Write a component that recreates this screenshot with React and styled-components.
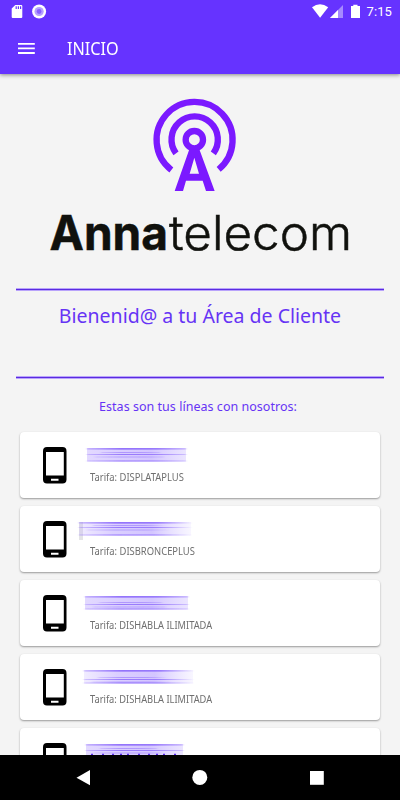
import React from "react";
import styled, { createGlobalStyle } from "styled-components";

const Global = createGlobalStyle`
  * { box-sizing: border-box; }
  body { margin: 0; background: #f4f4f4; font-family: "Noto Sans", "Open Sans", sans-serif; }
`;

const Screen = styled.div`
  width: 400px;
  height: 800px;
  display: flex;
  flex-direction: column;
  overflow: hidden;
  background: #f4f4f4;
`;

const Header = styled.header`
  flex: none;
  height: 74px;
  background: #6633ff;
  color: #fff;
  box-shadow: 0 1px 4px rgba(0, 0, 0, 0.45);
  z-index: 1;
`;

const StatusBar = styled.div`
  height: 23px;
  display: flex;
  justify-content: space-between;
`;

const StatusIcons = styled.svg`
  display: block;
  width: ${(p) => p.$width}px;
  height: 23px;
`;

const StatusRight = styled.div`
  display: flex;
`;

const Clock = styled.span`
  width: 40px;
  padding-left: 6.5px;
  font: 400 13px/23px Roboto, sans-serif;
  letter-spacing: 0.1px;
`;

const Toolbar = styled.div`
  height: 51px;
  padding-left: 17px;
  display: flex;
  align-items: center;
`;

const MenuIcon = styled.svg`
  display: block;
  width: 50px;
  height: 51px;
`;

const Title = styled.h1`
  margin: 0;
  font-size: 18px;
  font-weight: 400;
  line-height: 51px;
  transform: scaleX(0.9);
  transform-origin: left;
`;

const Content = styled.main`
  flex: 1;
  min-height: 0;
  overflow: hidden;
`;

const Logo = styled.svg`
  display: block;
  width: 400px;
  height: 214px;
`;

const Welcome = styled.section`
  margin: 0 16px;
`;

const Rule = styled.div`
  height: 3px;
  background: #5a2be0;
  border: solid #b9a3fb;
  border-width: 1px 0;
`;

const WelcomeBody = styled.div`
  height: 85px;
  padding-top: 11px;
`;

const Heading = styled.h2`
  margin: 0;
  color: #6633f5;
  font-size: ${(p) => p.$size}px;
  font-weight: 400;
  line-height: ${(p) => p.$line}px;
  letter-spacing: ${(p) => p.$spacing}px;
  text-align: center;
`;

const Lines = styled.section`
  padding-top: 15px;
`;

const Intro = styled.div`
  padding-right: 4px;
`;

const List = styled.div`
  margin: 13px 20px 0;
  display: flex;
  flex-direction: column;
  gap: 8px;
`;

const Card = styled.article`
  flex: none;
  height: 66px;
  padding-left: 23px;
  display: flex;
  background: #fff;
  border-radius: 4px;
  box-shadow: 0 1px 2px rgba(0, 0, 0, 0.38);
`;

const PhoneIcon = styled.svg`
  flex: none;
  display: block;
  width: 24px;
  height: 37px;
  margin-top: 15px;
`;

const Details = styled.div`
  width: 200px;
`;

const Smudge = styled.svg`
  display: block;
  width: 200px;
  height: 37px;
`;

const Tariff = styled.p`
  margin: 0 0 0 22.5px;
  color: #6f6f6f;
  font-size: 10px;
  line-height: 16px;
  letter-spacing: 0;
  white-space: nowrap;
  transform: scaleX(${(p) => p.$scale});
  transform-origin: left;
`;

const NavBar = styled.nav`
  flex: none;
  height: 45px;
  background: #000;
`;

const NavIcons = styled.svg`
  display: block;
  width: 400px;
  height: 45px;
`;

const rows = [
  { tariff: "DISPLATAPLUS", x: 20, w: 99, scale: 0.94, accent: 22 },
  { tariff: "DISBRONCEPLUS", x: 12, w: 112, scale: 0.94, accent: 21, fade: true },
  { tariff: "DISHABLA ILIMITADA", x: 18, w: 103, scale: 0.93, accent: 24 },
  { tariff: "DISHABLA ILIMITADA", x: 17, w: 109, scale: 0.93, accent: 25, fade: true },
  { x: 19, w: 97, accent: 22, dots: true },
];

function HiddenNumber({ row, id }) {
  const { x, w, accent, fade, dots } = row;
  return (
    <Smudge viewBox="0 0 200 37" aria-hidden="true">
      <defs>
        <filter id={`soft${id}`} x="-5%" y="-20%" width="110%" height="140%">
          <feGaussianBlur stdDeviation="1.2 0.45" />
        </filter>
        <linearGradient id={`wash${id}`}>
          <stop offset="0" stopColor="#b8a0ff" stopOpacity={fade ? 0.2 : 0.4} />
          <stop offset=".3" stopColor="#b49cff" stopOpacity=".48" />
          <stop offset=".65" stopColor="#a88cff" stopOpacity=".5" />
          <stop offset="1" stopColor="#c6b4ff" stopOpacity={fade ? 0.12 : 0.35} />
        </linearGradient>
        <linearGradient id={`ink${id}`}>
          <stop offset="0" stopColor="#7147fa" stopOpacity=".35" />
          <stop offset=".35" stopColor="#7147fa" stopOpacity=".9" />
          <stop offset=".7" stopColor="#7147fa" stopOpacity=".8" />
          <stop offset="1" stopColor="#7147fa" stopOpacity={fade ? 0.05 : 0.35} />
        </linearGradient>
      </defs>
      {id === 1 && <path d="M12 16h4v18h-4z" fill="#e4e4e7" />}
      <path d={`M${x} 16h${w}v13.6H${x}z`} fill={`url(#wash${id})`} />
      <g fill={`url(#ink${id})`} filter={`url(#soft${id})`}>
        <path d={`M${x} 16.2h${w}v1.2H${x}z`} />
        <path d={`M${x} 28.5h${w}v1.1H${x}z`} opacity=".75" />
        <path d={`M${x} ${accent}h${w}v1H${x}z`} opacity=".7" />
        <path d={`M${x + 14} ${accent - 2}h${w - 40}v1h${40 - w}z`} opacity=".45" />
        <path d={`M${x + 8} ${accent + 2.4}h${w - 30}v1h${30 - w}z`} opacity=".4" />
      </g>
      {dots && (
        <path d={`M${x + 5} 26.5h${w - 10}`} stroke="#5a2bf0" strokeWidth="1.6" strokeDasharray="2 9 2 8 2 6 2 5" />
      )}
    </Smudge>
  );
}

function LineCard({ row, id }) {
  return (
    <Card>
      <PhoneIcon viewBox="0 0 24 37">
        <path
          fillRule="evenodd"
          d="M4 0H19.5Q23.5 0 23.5 4V32.5Q23.5 36.5 19.5 36.5H4Q0 36.5 0 32.5V4Q0 0 4 0ZM3 5V28.5H20.8V5ZM8 31.8V33.8H15.5V31.8Z"
        />
      </PhoneIcon>
      <Details>
        <HiddenNumber row={row} id={id} />
        {row.tariff && <Tariff $scale={row.scale}>Tarifa: {row.tariff}</Tariff>}
      </Details>
    </Card>
  );
}

export default function App() {
  return (
    <Screen>
      <Global />
      <Header>
        <StatusBar>
          <StatusIcons $width={60} viewBox="0 0 60 23">
            <path
              fill="#fff"
              fillRule="evenodd"
              d="M15.3 5H21.2Q22.3 5 22.3 6V17Q22.3 18 21.2 18H12.8Q11.7 18 11.7 17V8.6ZM15.6 6.2V9H16.8V6.2ZM17.8 6.2V9H19V6.2ZM20 6.2V9H21.2V6.2Z"
            />
            <circle cx="39.1" cy="11.5" r="7" fill="#fff" />
            <circle cx="39.1" cy="11.5" r="4.6" fill="#b69fff" />
            <circle cx="39.1" cy="11.5" r="2.4" fill="#8860ff" />
          </StatusIcons>
          <StatusRight>
            <StatusIcons $width={53} viewBox="307 0 53 23">
              <path fill="#fff" d="M312 7.3Q320 1.2 328.2 7.3L320.1 17.8Z" />
              <path fill="#a68aff" d="M343 5V18H330Z" />
              <path fill="#fff" d="M338 10V18H330Z" />
              <path fill="#fff" d="M353.3 4.8H357.5V6H360V18H351V6H353.3Z" />
            </StatusIcons>
            <Clock>7:15</Clock>
          </StatusRight>
        </StatusBar>
        <Toolbar>
          <MenuIcon viewBox="0 0 50 51">
            <path d="M1 20.8H17.8M1 25.3H17.8M1 30H17.8" stroke="#fff" strokeWidth="1.8" />
          </MenuIcon>
          <Title>INICIO</Title>
        </Toolbar>
      </Header>
      <Content>
        <Logo viewBox="0 74 400 214">
          <g transform="translate(140 90) scale(.33333)" stroke="#7b19ff" fill="none">
            <path d="M94 240A114 114 0 1 1 236 238" strokeWidth="19" />
            <path d="M108 190A69.5 69.5 0 1 1 220 190" strokeWidth="19" />
            <circle cx="163" cy="149" r="26" strokeWidth="19" />
            <path
              fill="#7b19ff"
              stroke="none"
              fillRule="evenodd"
              d="M148 178H178L224 303H198L188 272H138L129 303H104ZM163 203L149 251H177Z"
            />
          </g>
          <g fill="#10110d" fontFamily="Inter, sans-serif" fontSize="48">
            <text x="49.5" y="250" fontWeight="700" stroke="#10110d" strokeWidth=".5" textLength="118.5" lengthAdjust="spacingAndGlyphs">
              Anna
            </text>
            <text x="169" y="250" fontWeight="300" stroke="#10110d" strokeWidth=".5" textLength="183" lengthAdjust="spacingAndGlyphs">
              telecom
            </text>
          </g>
        </Logo>
        <Welcome>
          <Rule />
          <WelcomeBody>
            <Heading $size={19.5} $line={28} $spacing={0}>
              Bienenid@ a tu Área de Cliente
            </Heading>
          </WelcomeBody>
          <Rule />
        </Welcome>
        <Lines>
          <Intro>
            <Heading $size={12.5} $line={25} $spacing={0.03}>
              Estas son tus líneas con nosotros:
            </Heading>
          </Intro>
          <List>
            {rows.map((row, i) => (
              <LineCard key={i} row={row} id={i} />
            ))}
          </List>
        </Lines>
      </Content>
      <NavBar>
        <NavIcons viewBox="0 755 400 45" fill="#fff">
          <path d="M76.5 777.7L90 770V785.2Z" />
          <circle cx="199.8" cy="777.4" r="7.5" />
          <path d="M310 771H323.8V784.8H310Z" />
        </NavIcons>
      </NavBar>
    </Screen>
  );
}
